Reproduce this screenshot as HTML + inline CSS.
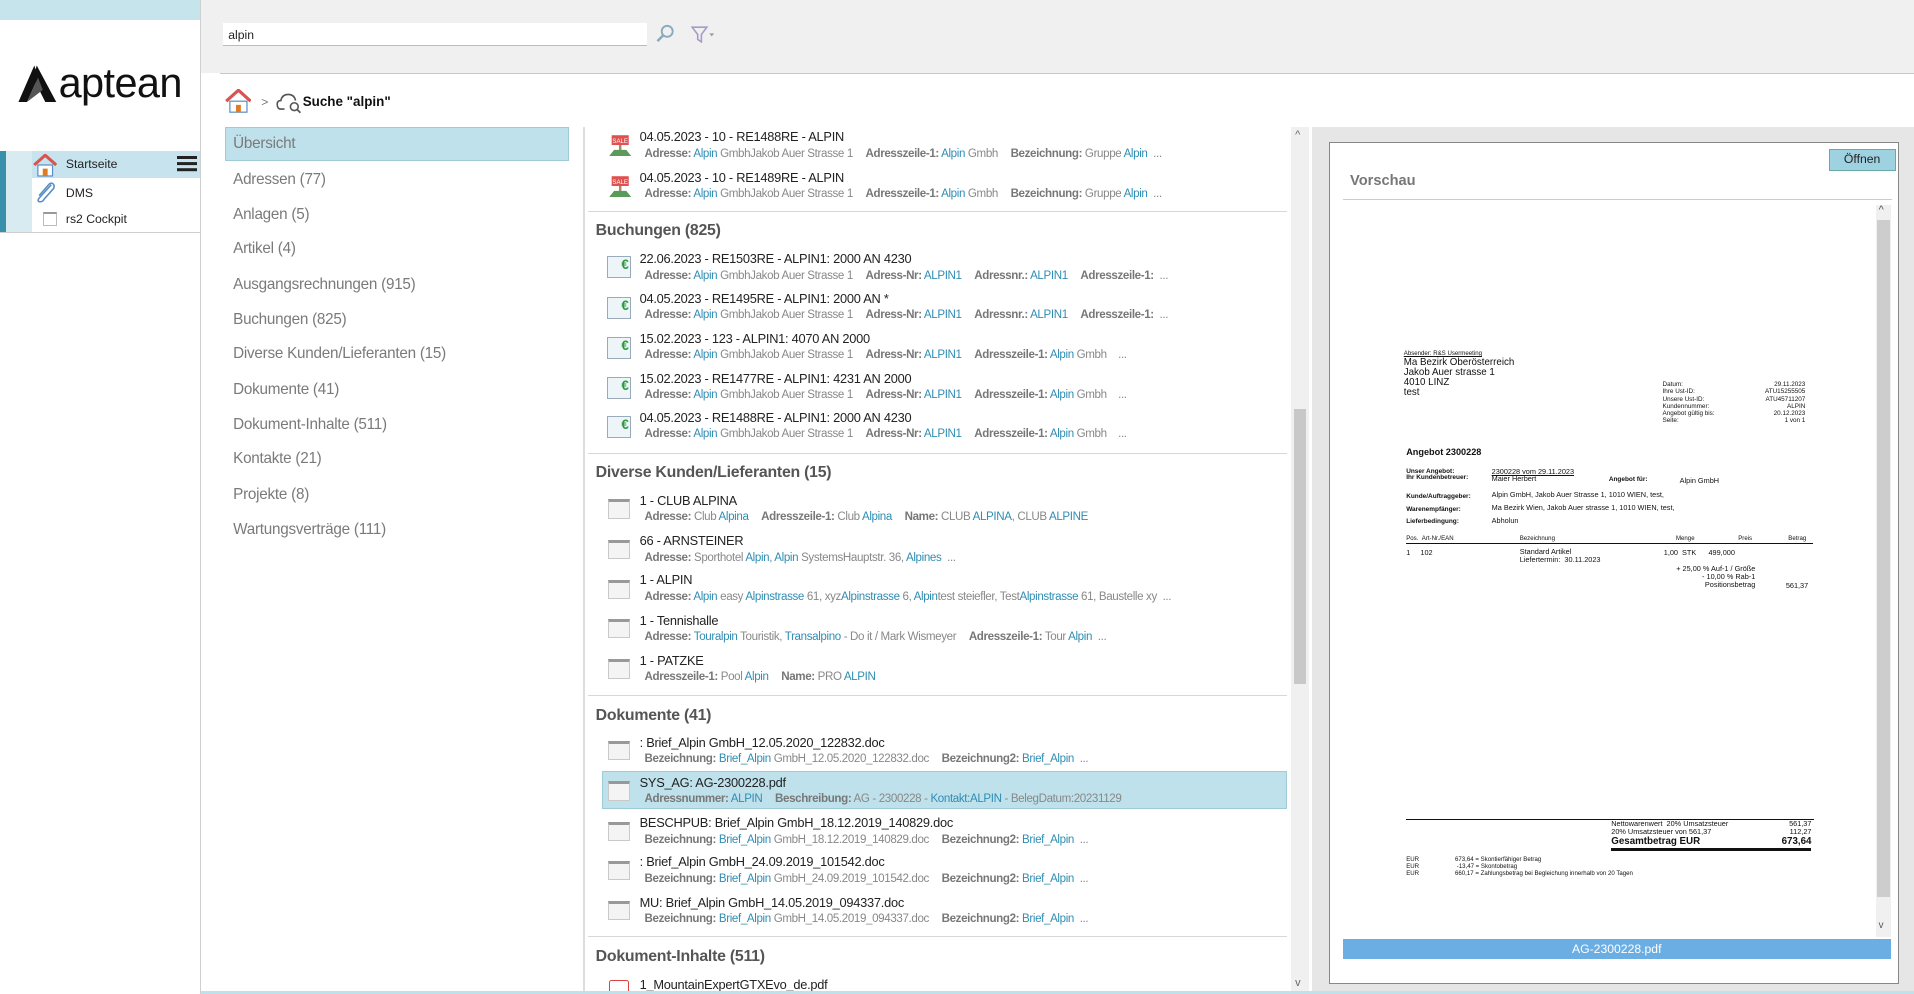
<!DOCTYPE html>
<html><head><meta charset="utf-8"><style>
html,body{margin:0;padding:0;width:1914px;height:994px;overflow:hidden;background:#fff}
#w{position:absolute;left:0;top:0;width:1568px;height:814px;zoom:1.22066;font-family:"Liberation Sans",Arial,sans-serif;overflow:hidden;background:#fff}
.a{position:absolute}
.cat{position:absolute;left:191px;font-size:12.5px;color:#7a7a7a;letter-spacing:-0.2px}
.h{position:absolute;left:488px;font-size:13px;font-weight:bold;color:#555;letter-spacing:-0.2px}
.t{position:absolute;left:524px;font-size:10.5px;color:#222;letter-spacing:-0.2px;white-space:nowrap}
.s{position:absolute;left:528px;font-size:9.5px;color:#888;letter-spacing:-0.3px;white-space:nowrap}
.s b{color:#777;margin-left:8px}
.s b:first-child{margin-left:0}
.s i{font-style:normal;color:#2f8db3}
.ln{position:absolute;left:482px;width:572px;height:1px;background:#d8d8d8}
.ic{position:absolute;left:498px;width:18px;height:16px;border:1px solid #c9c9c9;border-top:3px solid #999;background:#f4f4f4;box-sizing:border-box}
.ie{position:absolute;left:497px;width:20px;height:18px;border:1px solid #9ab;background:#eef5f8;box-sizing:border-box}
.ie:after{content:"€";position:absolute;right:1px;top:0;font-size:11px;color:#2a9a3a;font-weight:bold}
.sale{position:absolute;left:498px;width:20px;height:18px}
.d{position:absolute;font-family:"Liberation Sans",Arial,sans-serif;color:#111;white-space:nowrap}
</style></head><body><div id="w">
<!-- sidebar -->
<div class="a" style="left:0;top:0;width:164px;height:16px;background:#c6e4ec"></div>
<div class="a" style="left:164px;top:0;width:1px;height:814px;background:#cfcfcf"></div>
<svg class="a" style="left:13px;top:52px" width="34" height="34" viewBox="0 0 34 34"><path d="M15 2 L2 32 L9 32 L18 12 Z" fill="#111"/><path d="M17 2 L33 32 L24 32 L14 12 Z" fill="#111"/><path d="M9 32 L18 12 L22 22 Z" fill="#555"/></svg>
<div class="a" style="left:48px;top:48px;font-size:34px;color:#111;letter-spacing:-0.5px">aptean</div>
<div class="a" style="left:0;top:124px;width:5px;height:66px;background:#3a8fab"></div>
<div class="a" style="left:5px;top:124px;width:21px;height:66px;background:#d7ebf1"></div>
<div class="a" style="left:26px;top:124px;width:138px;height:22px;background:#c7e4ee"></div>
<div class="a" style="left:0;top:190px;width:164px;height:1px;background:#cfcfcf"></div>
<svg class="a" style="left:27px;top:126px" width="20" height="19" viewBox="0 0 20 19"><path d="M1 9 L10 1 L19 9" fill="none" stroke="#d9534f" stroke-width="2.5"/><rect x="4" y="9" width="12" height="9" fill="#fff" stroke="#5a8fc7"/><rect x="8" y="12" width="4" height="6" fill="#e07b22"/></svg>
<div class="a" style="left:54px;top:129px;font-size:10px;color:#222">Startseite</div>
<div class="a" style="left:145px;top:128px;width:16px;height:2px;background:#222;box-shadow:0 5px 0 #222,0 10px 0 #222"></div>
<svg class="a" style="left:27px;top:148px" width="20" height="20" viewBox="0 0 20 20"><path d="M15 3 L5 14 Q3 17 6 17 Q8 17 9 15 L17 6 Q18 3 16 2 Q14 1 12 4 L5 12" fill="none" stroke="#5a8fc7" stroke-width="1.3"/></svg>
<div class="a" style="left:54px;top:152px;font-size:10px;color:#222">DMS</div>
<div class="a" style="left:35px;top:174px;width:12px;height:11px;border:1px solid #bbb;border-top:2px solid #999;box-sizing:border-box"></div>
<div class="a" style="left:54px;top:174px;font-size:10px;color:#222">rs2 Cockpit</div>
<!-- top bar -->
<div class="a" style="left:165px;top:0;width:1403px;height:60px;background:#f0f0f0"></div>
<div class="a" style="left:180px;top:60px;width:1388px;height:1px;background:#c8c8c8"></div>
<div class="a" style="left:183px;top:19px;width:347px;height:18px;background:#fff;border-bottom:1px solid #bbb"></div>
<div class="a" style="left:187px;top:23px;font-size:10px;color:#222">alpin</div>
<svg class="a" style="left:537px;top:20px" width="16" height="16" viewBox="0 0 16 16"><circle cx="10" cy="6" r="4.5" fill="none" stroke="#8ab" stroke-width="1.5"/><path d="M7 9 L2 14" stroke="#8ab" stroke-width="2"/></svg>
<svg class="a" style="left:566px;top:21px" width="20" height="14" viewBox="0 0 20 14"><path d="M1 1 H13 L8.5 7 V13 L5.5 11 V7 Z" fill="none" stroke="#a89ac8" stroke-width="1.3"/><path d="M15 6 L17 8.5 L19 6" fill="#999"/></svg>
<!-- breadcrumb -->
<svg class="a" style="left:184px;top:73px" width="22" height="20" viewBox="0 0 22 20"><path d="M1 10 L11 1 L21 10" fill="none" stroke="#d9534f" stroke-width="2.6"/><rect x="4" y="10" width="14" height="9" fill="#fff" stroke="#5a8fc7"/><rect x="9" y="13" width="4" height="6" fill="#e07b22"/></svg>
<div class="a" style="left:214px;top:78px;font-size:10px;color:#777">&gt;</div>
<svg class="a" style="left:226px;top:75px" width="22" height="18" viewBox="0 0 22 18"><path d="M7 14 H4 Q1 14 1 10 Q1 7 4 7 Q5 2 10 2 Q15 2 16 7" fill="none" stroke="#555" stroke-width="1.3"/><circle cx="15" cy="12" r="3.2" fill="none" stroke="#555" stroke-width="1.3"/><path d="M17 14 L20 17" stroke="#555" stroke-width="1.4"/></svg>
<div class="a" style="left:248px;top:77px;font-size:11px;font-weight:bold;color:#111">Suche "alpin"</div>
<!-- categories -->
<div class="a" style="left:184px;top:104px;width:282px;height:28px;background:#bfe1eb;border:1px solid #9fcbd9;box-sizing:border-box"></div>
<div class="cat" style="top:111px">Übersicht</div>
<div class="cat" style="top:140px">Adressen (77)</div>
<div class="cat" style="top:169px">Anlagen (5)</div>
<div class="cat" style="top:197px">Artikel (4)</div>
<div class="cat" style="top:226px">Ausgangsrechnungen (915)</div>
<div class="cat" style="top:255px">Buchungen (825)</div>
<div class="cat" style="top:283px">Diverse Kunden/Lieferanten (15)</div>
<div class="cat" style="top:312px">Dokumente (41)</div>
<div class="cat" style="top:341px">Dokument-Inhalte (511)</div>
<div class="cat" style="top:369px">Kontakte (21)</div>
<div class="cat" style="top:398px">Projekte (8)</div>
<div class="cat" style="top:427px">Wartungsverträge (111)</div>
<div class="a" style="left:478px;top:104px;width:1px;height:710px;background:#ddd"></div>
<!-- scrollbar -->
<div class="a" style="left:1058px;top:104px;width:14px;height:710px;background:#f0f0f0"></div>
<div class="a" style="left:1060px;top:335px;width:10px;height:225px;background:#c8c8c8"></div>
<div class="a" style="left:1061px;top:106px;font-size:9px;color:#666">&#94;</div>
<div class="a" style="left:1061px;top:800px;font-size:9px;color:#666">v</div>
<!-- results -->
<div class="a" style="left:493px;top:632px;width:561px;height:31px;background:#bfe1eb;border:1px solid #9fcbd9;box-sizing:border-box"></div>
<svg class="sale" style="top:110px" viewBox="0 0 20 18"><rect x="3" y="1" width="14" height="8" fill="#e05050"/><text x="10" y="7.5" font-size="5" fill="#fff" text-anchor="middle" font-family="Liberation Sans">SALE</text><rect x="9" y="9" width="2" height="6" fill="#a86"/><path d="M1 18 L5 13 H15 L19 18 Z" fill="#5a9a5a"/></svg>
<svg class="sale" style="top:143px" viewBox="0 0 20 18"><rect x="3" y="1" width="14" height="8" fill="#e05050"/><text x="10" y="7.5" font-size="5" fill="#fff" text-anchor="middle" font-family="Liberation Sans">SALE</text><rect x="9" y="9" width="2" height="6" fill="#a86"/><path d="M1 18 L5 13 H15 L19 18 Z" fill="#5a9a5a"/></svg>
<div class="t" style="top:106px">04.05.2023 - 10 - RE1488RE - ALPIN</div>
<div class="s" style="top:121px"><b>Adresse:</b> <i>Alpin</i> GmbhJakob Auer Strasse 1 <b>Adresszeile-1:</b> <i>Alpin</i> Gmbh <b>Bezeichnung:</b> Gruppe <i>Alpin</i> &nbsp;...</div>
<div class="t" style="top:139px">04.05.2023 - 10 - RE1489RE - ALPIN</div>
<div class="s" style="top:154px"><b>Adresse:</b> <i>Alpin</i> GmbhJakob Auer Strasse 1 <b>Adresszeile-1:</b> <i>Alpin</i> Gmbh <b>Bezeichnung:</b> Gruppe <i>Alpin</i> &nbsp;...</div>
<div class="ln" style="top:173px"></div>
<div class="h" style="top:182px">Buchungen (825)</div>
<div class="ie" style="top:210px"></div><div class="ie" style="top:243px"></div><div class="ie" style="top:276px"></div><div class="ie" style="top:309px"></div><div class="ie" style="top:341px"></div>
<div class="t" style="top:206px">22.06.2023 - RE1503RE - ALPIN1: 2000 AN 4230</div>
<div class="s" style="top:221px"><b>Adresse:</b> <i>Alpin</i> GmbhJakob Auer Strasse 1 <b>Adress-Nr:</b> <i>ALPIN1</i> <b>Adressnr.:</b> <i>ALPIN1</i> <b>Adresszeile-1:</b> &nbsp;...</div>
<div class="t" style="top:238px">04.05.2023 - RE1495RE - ALPIN1: 2000 AN *</div>
<div class="s" style="top:253px"><b>Adresse:</b> <i>Alpin</i> GmbhJakob Auer Strasse 1 <b>Adress-Nr:</b> <i>ALPIN1</i> <b>Adressnr.:</b> <i>ALPIN1</i> <b>Adresszeile-1:</b> &nbsp;...</div>
<div class="t" style="top:271px">15.02.2023 - 123 - ALPIN1: 4070 AN 2000</div>
<div class="s" style="top:286px"><b>Adresse:</b> <i>Alpin</i> GmbhJakob Auer Strasse 1 <b>Adress-Nr:</b> <i>ALPIN1</i> <b>Adresszeile-1:</b> <i>Alpin</i> Gmbh &nbsp;&nbsp;&nbsp;...</div>
<div class="t" style="top:304px">15.02.2023 - RE1477RE - ALPIN1: 4231 AN 2000</div>
<div class="s" style="top:319px"><b>Adresse:</b> <i>Alpin</i> GmbhJakob Auer Strasse 1 <b>Adress-Nr:</b> <i>ALPIN1</i> <b>Adresszeile-1:</b> <i>Alpin</i> Gmbh &nbsp;&nbsp;&nbsp;...</div>
<div class="t" style="top:336px">04.05.2023 - RE1488RE - ALPIN1: 2000 AN 4230</div>
<div class="s" style="top:351px"><b>Adresse:</b> <i>Alpin</i> GmbhJakob Auer Strasse 1 <b>Adress-Nr:</b> <i>ALPIN1</i> <b>Adresszeile-1:</b> <i>Alpin</i> Gmbh &nbsp;&nbsp;&nbsp;...</div>
<div class="ln" style="top:371px"></div>
<div class="h" style="top:380px">Diverse Kunden/Lieferanten (15)</div>
<div class="ic" style="top:409px"></div><div class="ic" style="top:442px"></div><div class="ic" style="top:475px"></div><div class="ic" style="top:507px"></div><div class="ic" style="top:540px"></div>
<div class="t" style="top:404px">1 - CLUB ALPINA</div>
<div class="s" style="top:419px"><b>Adresse:</b> Club <i>Alpina</i> <b>Adresszeile-1:</b> Club <i>Alpina</i> <b>Name:</b> CLUB <i>ALPINA</i>, CLUB <i>ALPINE</i></div>
<div class="t" style="top:437px">66 - ARNSTEINER</div>
<div class="s" style="top:452px"><b>Adresse:</b> Sporthotel <i>Alpin</i>, <i>Alpin</i> SystemsHauptstr. 36, <i>Alpines</i> &nbsp;...</div>
<div class="t" style="top:469px">1 - ALPIN</div>
<div class="s" style="top:484px"><b>Adresse:</b> <i>Alpin</i> easy <i>Alpinstrasse</i> 61, xyz<i>Alpinstrasse</i> 6, <i>Alpin</i>test steiefler, Test<i>Alpinstrasse</i> 61, Baustelle xy &nbsp;...</div>
<div class="t" style="top:502px">1 - Tennishalle</div>
<div class="s" style="top:517px"><b>Adresse:</b> <i>Touralpin</i> Touristik, <i>Transalpino</i> - Do it / Mark Wismeyer <b>Adresszeile-1:</b> Tour <i>Alpin</i> &nbsp;...</div>
<div class="t" style="top:535px">1 - PATZKE</div>
<div class="s" style="top:550px"><b>Adresszeile-1:</b> Pool <i>Alpin</i> <b>Name:</b> PRO <i>ALPIN</i></div>
<div class="ln" style="top:569px"></div>
<div class="h" style="top:579px">Dokumente (41)</div>
<div class="ic" style="top:607px"></div><div class="ic" style="top:640px"></div><div class="ic" style="top:673px"></div><div class="ic" style="top:705px"></div><div class="ic" style="top:738px"></div>
<div class="t" style="top:602px">: Brief_Alpin GmbH_12.05.2020_122832.doc</div>
<div class="s" style="top:617px"><b>Bezeichnung:</b> <i>Brief_Alpin</i> GmbH_12.05.2020_122832.doc <b>Bezeichnung2:</b> <i>Brief_Alpin</i> &nbsp;...</div>
<div class="t" style="top:635px">SYS_AG: AG-2300228.pdf</div>
<div class="s" style="top:650px"><b>Adressnummer:</b> <i>ALPIN</i> <b>Beschreibung:</b> AG - 2300228 - <i>Kontakt:ALPIN</i> - BelegDatum:20231129</div>
<div class="t" style="top:668px">BESCHPUB: Brief_Alpin GmbH_18.12.2019_140829.doc</div>
<div class="s" style="top:683px"><b>Bezeichnung:</b> <i>Brief_Alpin</i> GmbH_18.12.2019_140829.doc <b>Bezeichnung2:</b> <i>Brief_Alpin</i> &nbsp;...</div>
<div class="t" style="top:700px">: Brief_Alpin GmbH_24.09.2019_101542.doc</div>
<div class="s" style="top:715px"><b>Bezeichnung:</b> <i>Brief_Alpin</i> GmbH_24.09.2019_101542.doc <b>Bezeichnung2:</b> <i>Brief_Alpin</i> &nbsp;...</div>
<div class="t" style="top:733px">MU: Brief_Alpin GmbH_14.05.2019_094337.doc</div>
<div class="s" style="top:748px"><b>Bezeichnung:</b> <i>Brief_Alpin</i> GmbH_14.05.2019_094337.doc <b>Bezeichnung2:</b> <i>Brief_Alpin</i> &nbsp;...</div>
<div class="ln" style="top:767px"></div>
<div class="h" style="top:777px">Dokument-Inhalte (511)</div>
<div class="a" style="left:499px;top:803px;width:16px;height:14px;border:1px solid #d44;border-radius:2px;box-sizing:border-box"></div>
<div class="t" style="top:800px">1_MountainExpertGTXEvo_de.pdf</div>
<!-- preview -->
<div class="a" style="left:1075px;top:104px;width:493px;height:710px;background:#e6e6e6"></div>
<div class="a" style="left:1089px;top:116px;width:467px;height:690px;background:#fff;border:1px solid #888;box-sizing:border-box"></div>
<div class="a" style="left:1498px;top:122px;width:55px;height:18px;background:#9fd2e0;border:1px solid #6aa;box-sizing:border-box;font-size:10px;color:#222;text-align:center;line-height:16px">Öffnen</div>
<div class="a" style="left:1106px;top:142px;font-size:12px;font-weight:bold;color:#777">Vorschau</div>
<div class="a" style="left:1100px;top:163px;width:450px;height:1px;background:#ccc"></div>
<div class="a" style="left:1537px;top:168px;width:12px;height:600px;background:#f0f0f0"></div>
<div class="a" style="left:1538px;top:180px;width:10px;height:555px;background:#cdcdcd"></div>
<div class="a" style="left:1539px;top:167px;font-size:9px;color:#555">&#94;</div>
<div class="a" style="left:1539px;top:754px;font-size:8px;color:#555">v</div>
<div class="a" style="left:1100px;top:769px;width:449px;height:17px;background:#6aaee4;color:#fff;font-size:10px;text-align:center;line-height:17px">AG-2300228.pdf</div>
<!-- document -->
<div class="d" style="left:1150px;top:287px;font-size:5px;text-decoration:underline">Absender: R&amp;S Usermeeting</div>
<div class="d" style="left:1150px;top:293px;font-size:8px;line-height:8.2px">Ma Bezirk Oberösterreich<br>Jakob Auer strasse 1<br>4010 LINZ<br>test</div>
<div class="d" style="left:1362px;top:312px;font-size:5.2px;line-height:6px">Datum:<br>Ihre Ust-ID:<br>Unsere Ust-ID:<br>Kundennummer:<br>Angebot gültig bis:<br>Seite:</div>
<div class="d" style="left:1430px;top:312px;width:49px;text-align:right;font-size:5.2px;line-height:6px">29.11.2023<br>ATU15255505<br>ATU45711207<br>ALPIN<br>20.12.2023<br>1 von 1</div>
<div class="d" style="left:1152px;top:366px;font-size:7.5px;font-weight:bold">Angebot 2300228</div>
<div class="d" style="left:1152px;top:384px;font-size:5.3px;font-weight:bold;line-height:5.5px">Unser Angebot:<br>Ihr Kundenbetreuer:</div>
<div class="d" style="left:1222px;top:383px;font-size:6px;line-height:6.5px"><u>2300228 vom 29.11.2023</u><br>Maier Herbert</div>
<div class="d" style="left:1318px;top:390px;font-size:5.3px;font-weight:bold">Angebot für:</div>
<div class="d" style="left:1376px;top:390px;font-size:6px">Alpin GmbH</div>
<div class="d" style="left:1152px;top:402px;font-size:5.3px;font-weight:bold;line-height:10.5px">Kunde/Auftraggeber:<br>Warenempfänger:<br>Lieferbedingung:</div>
<div class="d" style="left:1222px;top:401px;font-size:6px;line-height:10.5px">Alpin GmbH, Jakob Auer Strasse 1, 1010 WIEN, test,<br>Ma Bezirk Wien, Jakob Auer strasse 1, 1010 WIEN, test,<br>Abholun</div>
<div class="d" style="left:1152px;top:438px;font-size:5px">Pos. &nbsp;Art-Nr./EAN</div>
<div class="d" style="left:1245px;top:438px;font-size:5px">Bezeichnung</div>
<div class="d" style="left:1373px;top:438px;font-size:5px">Menge</div>
<div class="d" style="left:1424px;top:438px;font-size:5px">Preis</div>
<div class="d" style="left:1465px;top:438px;font-size:5px">Betrag</div>
<div class="a" style="left:1152px;top:445px;width:333px;height:1px;background:#111"></div>
<div class="d" style="left:1152px;top:449px;font-size:6px">1 &nbsp;&nbsp;&nbsp;&nbsp;102</div>
<div class="d" style="left:1245px;top:449px;font-size:6px;line-height:6.5px">Standard Artikel<br>Liefertermin: &nbsp;30.11.2023</div>
<div class="d" style="left:1363px;top:449px;font-size:6px">1,00 &nbsp;STK &nbsp;&nbsp;&nbsp;&nbsp;&nbsp;499,000</div>
<div class="d" style="left:1350px;top:463px;width:88px;text-align:right;font-size:6px;line-height:6.5px">+ 25,00 % Auf-1 / Größe<br>- 10,00 % Rab-1<br>Positionsbetrag</div>
<div class="d" style="left:1463px;top:476px;font-size:6px">561,37</div>
<div class="a" style="left:1152px;top:671px;width:334px;height:1px;background:#111"></div>
<div class="d" style="left:1320px;top:672px;font-size:6px;line-height:6.3px">Nettowarenwert &nbsp;20% Umsatzsteuer<br>20% Umsatzsteuer von 561,37</div>
<div class="d" style="left:1440px;top:672px;width:44px;text-align:right;font-size:6px;line-height:6.3px">561,37<br>112,27</div>
<div class="d" style="left:1320px;top:685px;font-size:8px;font-weight:bold">Gesamtbetrag EUR</div>
<div class="d" style="left:1440px;top:685px;width:44px;text-align:right;font-size:8px;font-weight:bold">673,64</div>
<div class="a" style="left:1320px;top:695px;width:164px;height:2px;background:#111"></div>
<div class="d" style="left:1152px;top:701px;font-size:5px;line-height:6px">EUR<br>EUR<br>EUR</div>
<div class="d" style="left:1192px;top:701px;font-size:5px;line-height:6px">673,64 = Skontierfähiger Betrag<br>&nbsp;-13,47 = Skontobetrag<br>660,17 = Zahlungsbetrag bei Begleichung innerhalb von 20 Tagen</div>
<div class="a" style="left:165px;top:812px;width:1403px;height:2px;background:#bfe1eb"></div>
</div></body></html>
